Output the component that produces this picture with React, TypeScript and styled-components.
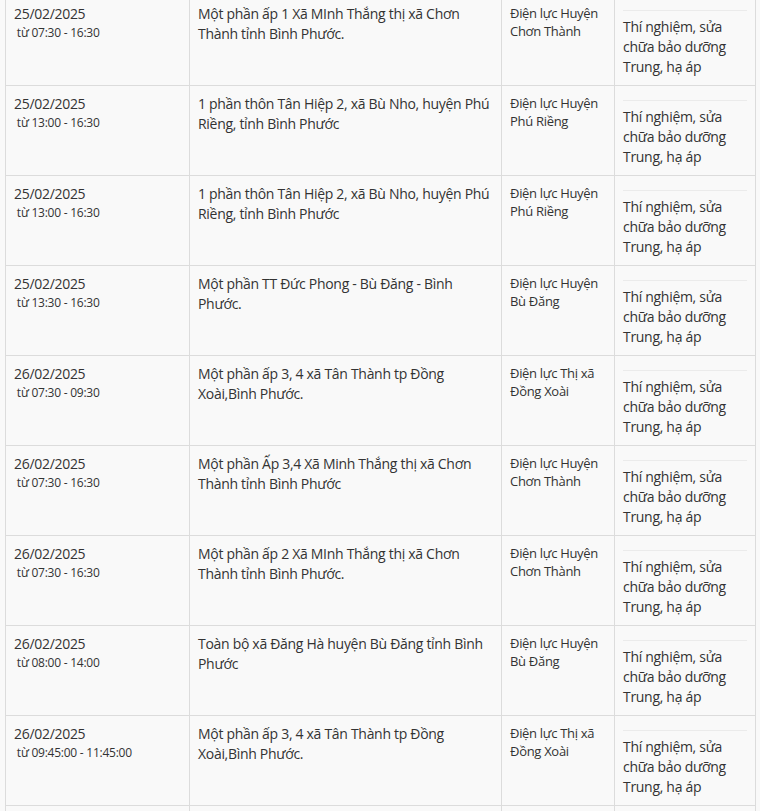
import styled, { createGlobalStyle } from 'styled-components'

type Outage = {
  date: string
  time: string
  area: string
  unit: string
  reason: string
}

const outages: Outage[] = [
  {
    date: '25/02/2025',
    time: '07:30 - 16:30',
    area: 'Một phần ấp 1 Xã MInh Thắng thị xã Chơn Thành tỉnh Bình Phước.',
    unit: 'Điện lực Huyện Chơn Thành',
    reason: 'Thí nghiệm, sửa chữa bảo dưỡng Trung, hạ áp',
  },
  {
    date: '25/02/2025',
    time: '13:00 - 16:30',
    area: '1 phần thôn Tân Hiệp 2, xã Bù Nho, huyện Phú Riềng, tỉnh Bình Phước',
    unit: 'Điện lực Huyện Phú Riềng',
    reason: 'Thí nghiệm, sửa chữa bảo dưỡng Trung, hạ áp',
  },
  {
    date: '25/02/2025',
    time: '13:00 - 16:30',
    area: '1 phần thôn Tân Hiệp 2, xã Bù Nho, huyện Phú Riềng, tỉnh Bình Phước',
    unit: 'Điện lực Huyện Phú Riềng',
    reason: 'Thí nghiệm, sửa chữa bảo dưỡng Trung, hạ áp',
  },
  {
    date: '25/02/2025',
    time: '13:30 - 16:30',
    area: 'Một phần TT Đức Phong - Bù Đăng - Bình Phước.',
    unit: 'Điện lực Huyện Bù Đăng',
    reason: 'Thí nghiệm, sửa chữa bảo dưỡng Trung, hạ áp',
  },
  {
    date: '26/02/2025',
    time: '07:30 - 09:30',
    area: 'Một phần ấp 3, 4 xã Tân Thành tp Đồng Xoài,Bình Phước.',
    unit: 'Điện lực Thị xã Đồng Xoài',
    reason: 'Thí nghiệm, sửa chữa bảo dưỡng Trung, hạ áp',
  },
  {
    date: '26/02/2025',
    time: '07:30 - 16:30',
    area: 'Một phần Ấp 3,4 Xã Minh Thắng thị xã Chơn Thành tỉnh Bình Phước',
    unit: 'Điện lực Huyện Chơn Thành',
    reason: 'Thí nghiệm, sửa chữa bảo dưỡng Trung, hạ áp',
  },
  {
    date: '26/02/2025',
    time: '07:30 - 16:30',
    area: 'Một phần ấp 2 Xã MInh Thắng thị xã Chơn Thành tỉnh Bình Phước.',
    unit: 'Điện lực Huyện Chơn Thành',
    reason: 'Thí nghiệm, sửa chữa bảo dưỡng Trung, hạ áp',
  },
  {
    date: '26/02/2025',
    time: '08:00 - 14:00',
    area: 'Toàn bộ xã Đăng Hà huyện Bù Đăng tỉnh Bình Phước',
    unit: 'Điện lực Huyện Bù Đăng',
    reason: 'Thí nghiệm, sửa chữa bảo dưỡng Trung, hạ áp',
  },
  {
    date: '26/02/2025',
    time: '09:45:00 - 11:45:00',
    area: 'Một phần ấp 3, 4 xã Tân Thành tp Đồng Xoài,Bình Phước.',
    unit: 'Điện lực Thị xã Đồng Xoài',
    reason: 'Thí nghiệm, sửa chữa bảo dưỡng Trung, hạ áp',
  },
]

export default function App() {
  return (
    <>
      <GlobalStyle />
      <Page>
        <Table>
          <colgroup>
            <col style={{ width: 184 }} />
            <col style={{ width: 312 }} />
            <col style={{ width: 113 }} />
            <col style={{ width: 141 }} />
          </colgroup>
          <tbody>
            {outages.map((o, i) => (
              <tr key={i}>
                <Cell>
                  <DateText>{o.date}</DateText>
                  <TimeText>&nbsp;từ {o.time}</TimeText>
                </Cell>
                <Cell>
                  <AreaText>{o.area}</AreaText>
                </Cell>
                <Cell>
                  <UnitText>{o.unit}</UnitText>
                </Cell>
                <Cell>
                  <Rule />
                  <ReasonText>{o.reason}</ReasonText>
                </Cell>
              </tr>
            ))}
            {/* next row, only its top edge is in view */}
            <tr>
              <Cell />
              <Cell />
              <Cell />
              <Cell />
            </tr>
          </tbody>
        </Table>
      </Page>
    </>
  )
}

const GlobalStyle = createGlobalStyle`
  html, body {
    margin: 0;
    background: #f9f9f9;
    font-family: 'Open Sans', 'Noto Sans', sans-serif;
    color: #333;
  }
`
const Page = styled.div`
  height: 811px;
  overflow: hidden;
  padding-left: 5px;
`
const Table = styled.table`
  margin-top: -5px;
  width: 750px;
  table-layout: fixed;
  border-collapse: collapse;
  background: #f9f9f9;
  letter-spacing: -0.3px;
`
const Cell = styled.td`
  border: 1px solid #dcdcdc;
  padding: 8px;
  vertical-align: top;
  height: 73px;
`
const DateText = styled.div`
  font-size: 14px;
  line-height: 20px;
`
const TimeText = styled.div`
  font-size: 12px;
  line-height: 18px;
  letter-spacing: -0.25px;
`
const AreaText = styled.div`
  font-size: 14px;
  line-height: 20px;
`
const UnitText = styled.div`
  font-size: 13px;
  line-height: 18px;
`
const Rule = styled.hr`
  margin: 6px 0;
  border: 0;
  border-top: 1px solid #ebebeb;
`
const ReasonText = styled.div`
  font-size: 14px;
  line-height: 20px;
`
